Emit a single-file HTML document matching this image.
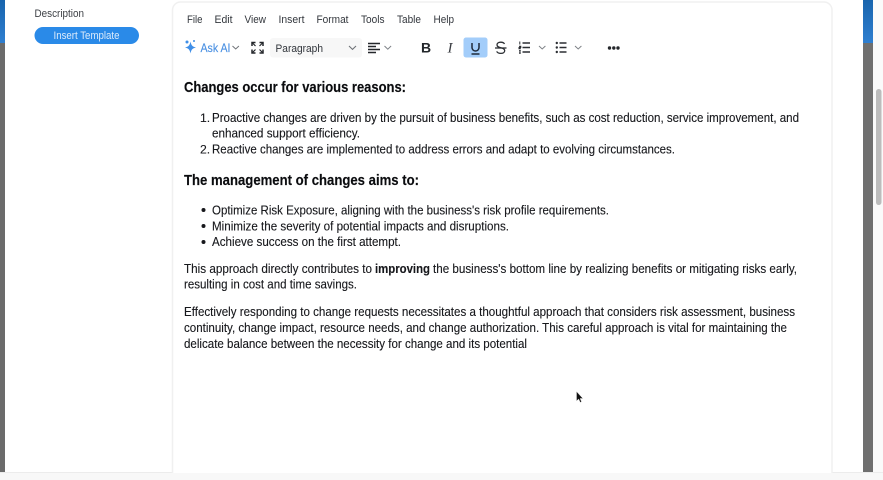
<!DOCTYPE html>
<html lang="en">
<head>
<meta charset="utf-8">
<title>Editor</title>
<style>
html,body{margin:0;padding:0;width:883px;height:480px;overflow:hidden;background:#fff}
svg{display:block;position:absolute;left:0;top:0;filter:blur(.3px)}
text{font-family:"Liberation Sans",Arial,sans-serif;fill:#17181c}
.b{font-size:12.8px;stroke:#17181c;stroke-width:.12px}
.h{font-size:14.8px;font-weight:bold;fill:#0b0c0f;stroke:#0b0c0f;stroke-width:.15px}
.m{font-size:11px;fill:#33373d}
.t{font-size:10.8px;fill:#40444b}
</style>
</head>
<body>
<svg width="883" height="480" viewBox="0 0 883 480" xmlns="http://www.w3.org/2000/svg">
<defs>
<linearGradient id="bl" x1="0" y1="0" x2="0" y2="1"><stop offset="0" stop-color="#1864ad"/><stop offset="1" stop-color="#2f7fd0"/></linearGradient>
</defs>
<rect width="883" height="480" fill="#fff"/>
<!-- left strip -->
<rect x="0" y="0" width="5" height="43" fill="url(#bl)"/>
<rect x="0" y="43" width="5" height="430" fill="#6b6b6b"/>
<!-- right strip -->
<rect x="863" y="0" width="10" height="43" fill="url(#bl)"/>
<rect x="863" y="43" width="10" height="430" fill="#6f6f6f"/>
<rect x="873" y="0" width="10" height="480" fill="#fafafa"/>
<rect x="876" y="89" width="5.500" height="116" rx="2.700" fill="#bcbcbc"/>
<!-- bottom bar -->
<rect x="0" y="472" width="883" height="8" fill="#f8f8f8"/>
<rect x="0" y="472" width="883" height="1" fill="#ececec"/>
<!-- left form -->
<text x="34.500" y="17" class="t" textLength="49.500" lengthAdjust="spacingAndGlyphs" style="fill:#3c3f44">Description</text>
<rect x="34.500" y="27" width="104.500" height="17" rx="8.500" fill="#2a8ae8"/>
<text x="53.500" y="39" class="t" textLength="66" lengthAdjust="spacingAndGlyphs" style="fill:#dcebfb">Insert Template</text>
<!-- editor frame -->
<path d="M172.500 473V10a8 8 0 0 1 8-8H824a8 8 0 0 1 8 8V473" fill="#fff" stroke="#f0f0f0" stroke-width="1.500"/>
<!-- menu -->
<g class="menu">
<text x="187" y="23" class="m" textLength="15.500" lengthAdjust="spacingAndGlyphs">File</text>
<text x="214.500" y="23" class="m" textLength="18" lengthAdjust="spacingAndGlyphs">Edit</text>
<text x="244.500" y="23" class="m" textLength="21.500" lengthAdjust="spacingAndGlyphs">View</text>
<text x="278.500" y="23" class="m" textLength="26" lengthAdjust="spacingAndGlyphs">Insert</text>
<text x="316.500" y="23" class="m" textLength="32" lengthAdjust="spacingAndGlyphs">Format</text>
<text x="361" y="23" class="m" textLength="23.500" lengthAdjust="spacingAndGlyphs">Tools</text>
<text x="397" y="23" class="m" textLength="24" lengthAdjust="spacingAndGlyphs">Table</text>
<text x="433.500" y="23" class="m" textLength="20.500" lengthAdjust="spacingAndGlyphs">Help</text>
</g>
<!-- Ask AI -->
<g fill="#3f8fe8">
<path d="M190.500 41.500c.8 3.900 1.800 5 5.500 6-3.700 1-4.700 2.100-5.500 6-.8-3.900-1.800-5-5.500-6 3.700-1 4.700-2.100 5.500-6z"/>
<circle cx="187" cy="42" r="1.500"/>
<circle cx="194" cy="41" r="1"/>
</g>
<text x="200.500" y="52" style="font-size:11.800px;fill:#4a90e2;stroke:#4a90e2;stroke-width:.15px" textLength="30" lengthAdjust="spacingAndGlyphs">Ask AI</text>
<path d="M232.500 46l3.200 3 3.200-3" fill="none" stroke="#6f7378" stroke-width="1"/>
<!-- fullscreen -->
<g fill="none" stroke="#24272b" stroke-width="1.500">
<path d="M252 46v-3.500h3.500M259.500 42.500h3.500V46M252 49.500v3.500h3.500M263 49.500V53h-3.500"/>
<path d="M252.500 43l3 3M262.500 43l-3 3M252.500 52.500l3-3M262.500 52.500l-3-3" stroke-width="1.200"/>
</g>
<!-- paragraph select -->
<rect x="270" y="38" width="92" height="19.500" rx="3" fill="#f7f7f7"/>
<text x="275.500" y="52" class="m" style="fill:#30343a" textLength="47.500" lengthAdjust="spacingAndGlyphs">Paragraph</text>
<path d="M349 46l3.500 3.400 3.500-3.400" fill="none" stroke="#6f7378" stroke-width="1.100"/>
<!-- align -->
<g stroke="#24272b" stroke-width="1.400">
<path d="M368 43.500h12M368 46.500h8M368 49.500h12M368 52.500h8"/>
</g>
<path d="M384.500 46l3.300 3.200 3.300-3.200" fill="none" stroke="#7d8186" stroke-width="1"/>
<!-- bold -->
<text x="421" y="52.500" style="font-size:14px;font-weight:bold;fill:#22262a">B</text>
<!-- italic -->
<text x="447.500" y="52.500" style="font-family:'Liberation Serif',serif;font-size:15px;font-style:italic;fill:#3a3d42">I</text>
<!-- underline -->
<rect x="463.500" y="37.500" width="24" height="20" rx="2.500" fill="#a3cdfa"/>
<path d="M472 43v4.500a3.500 3.500 0 0 0 7 0v-4.500" fill="none" stroke="#1f2a3a" stroke-width="1.500"/>
<path d="M471.500 54h8" stroke="#1f2a3a" stroke-width="1.500"/>
<!-- strike -->
<path d="M504.500 44c-.6-1.200-2-1.800-3.800-1.800-2.200 0-3.700 1-3.700 2.700 0 1.800 1.700 2.300 3.800 2.800 2.200.5 3.900 1.100 3.900 2.900 0 1.800-1.700 2.800-3.900 2.800-2 0-3.500-.7-4.100-2" fill="none" stroke="#2c2f34" stroke-width="1.300"/>
<path d="M495 48h11.500" stroke="#2c2f34" stroke-width="1.300"/>
<!-- numbered list -->
<g stroke="#2c2f34" stroke-width="1.500">
<path d="M522.500 43h7.500M522.500 47.500h7.500M522.500 52h7.500"/>
<path d="M519.800 41.500v3M519 46.300h1.800v1.200h-1.800v1.200h1.800M519 50.600h1.800M519 52h1.800M519 53.300h1.800" stroke-width="1"/>
</g>
<path d="M539 46l3.200 3 3.200-3" fill="none" stroke="#7d8186" stroke-width="1"/>
<!-- bullet list -->
<g stroke="#2c2f34" stroke-width="1.500">
<path d="M559.500 43h7M559.500 47.500h7M559.500 52h7"/>
</g>
<g fill="#2c2f34"><circle cx="556.800" cy="43" r="1.200"/><circle cx="556.800" cy="47.500" r="1.200"/><circle cx="556.800" cy="52" r="1.200"/></g>
<path d="M575 46l3.200 3 3.200-3" fill="none" stroke="#7d8186" stroke-width="1"/>
<!-- more -->
<g fill="#24272b"><circle cx="609.500" cy="48" r="1.700"/><circle cx="613.800" cy="48" r="1.700"/><circle cx="618" cy="48" r="1.700"/></g>
<!-- content -->
<text x="184" y="92" class="h" textLength="222" lengthAdjust="spacingAndGlyphs">Changes occur for various reasons:</text>
<text x="200" y="122" class="b" style="font-size:12.200px">1.</text>
<text x="212" y="122" class="b" textLength="587" lengthAdjust="spacingAndGlyphs">Proactive changes are driven by the pursuit of business benefits, such as cost reduction, service improvement, and</text>
<text x="212" y="137.500" class="b" textLength="148" lengthAdjust="spacingAndGlyphs">enhanced support efficiency.</text>
<text x="200" y="153.500" class="b" style="font-size:12.200px">2.</text>
<text x="212" y="153.500" class="b" textLength="463" lengthAdjust="spacingAndGlyphs">Reactive changes are implemented to address errors and adapt to evolving circumstances.</text>
<text x="184" y="185" class="h" textLength="235" lengthAdjust="spacingAndGlyphs">The management of changes aims to:</text>
<circle cx="203.500" cy="210" r="2" fill="#17181c"/>
<text x="212" y="214.500" class="b" textLength="397" lengthAdjust="spacingAndGlyphs">Optimize Risk Exposure, aligning with the business's risk profile requirements.</text>
<circle cx="203.500" cy="226" r="2" fill="#17181c"/>
<text x="212" y="230.500" class="b" textLength="297" lengthAdjust="spacingAndGlyphs">Minimize the severity of potential impacts and disruptions.</text>
<circle cx="203.500" cy="242" r="2" fill="#17181c"/>
<text x="212" y="246" class="b" textLength="189" lengthAdjust="spacingAndGlyphs">Achieve success on the first attempt.</text>
<text x="184" y="273" class="b" textLength="188" lengthAdjust="spacingAndGlyphs">This approach directly contributes to</text>
<text x="375" y="273" class="b" style="font-weight:bold" textLength="55" lengthAdjust="spacingAndGlyphs">improving</text>
<text x="433" y="273" class="b" textLength="364" lengthAdjust="spacingAndGlyphs">the business's bottom line by realizing benefits or mitigating risks early,</text>
<text x="184" y="288.500" class="b" textLength="173" lengthAdjust="spacingAndGlyphs">resulting in cost and time savings.</text>
<text x="184" y="316" class="b" textLength="611" lengthAdjust="spacingAndGlyphs">Effectively responding to change requests necessitates a thoughtful approach that considers risk assessment, business</text>
<text x="184" y="332" class="b" textLength="603" lengthAdjust="spacingAndGlyphs">continuity, change impact, resource needs, and change authorization. This careful approach is vital for maintaining the</text>
<text x="184" y="348" class="b" textLength="343" lengthAdjust="spacingAndGlyphs">delicate balance between the necessity for change and its potential</text>
<!-- cursor -->
<path d="M576.500 391.500v9.500l2.200-2 1.500 3.400 1.400-.6-1.500-3.300h2.800z" fill="#111" stroke="#ddd" stroke-width=".5"/>
</svg>
</body>
</html>
